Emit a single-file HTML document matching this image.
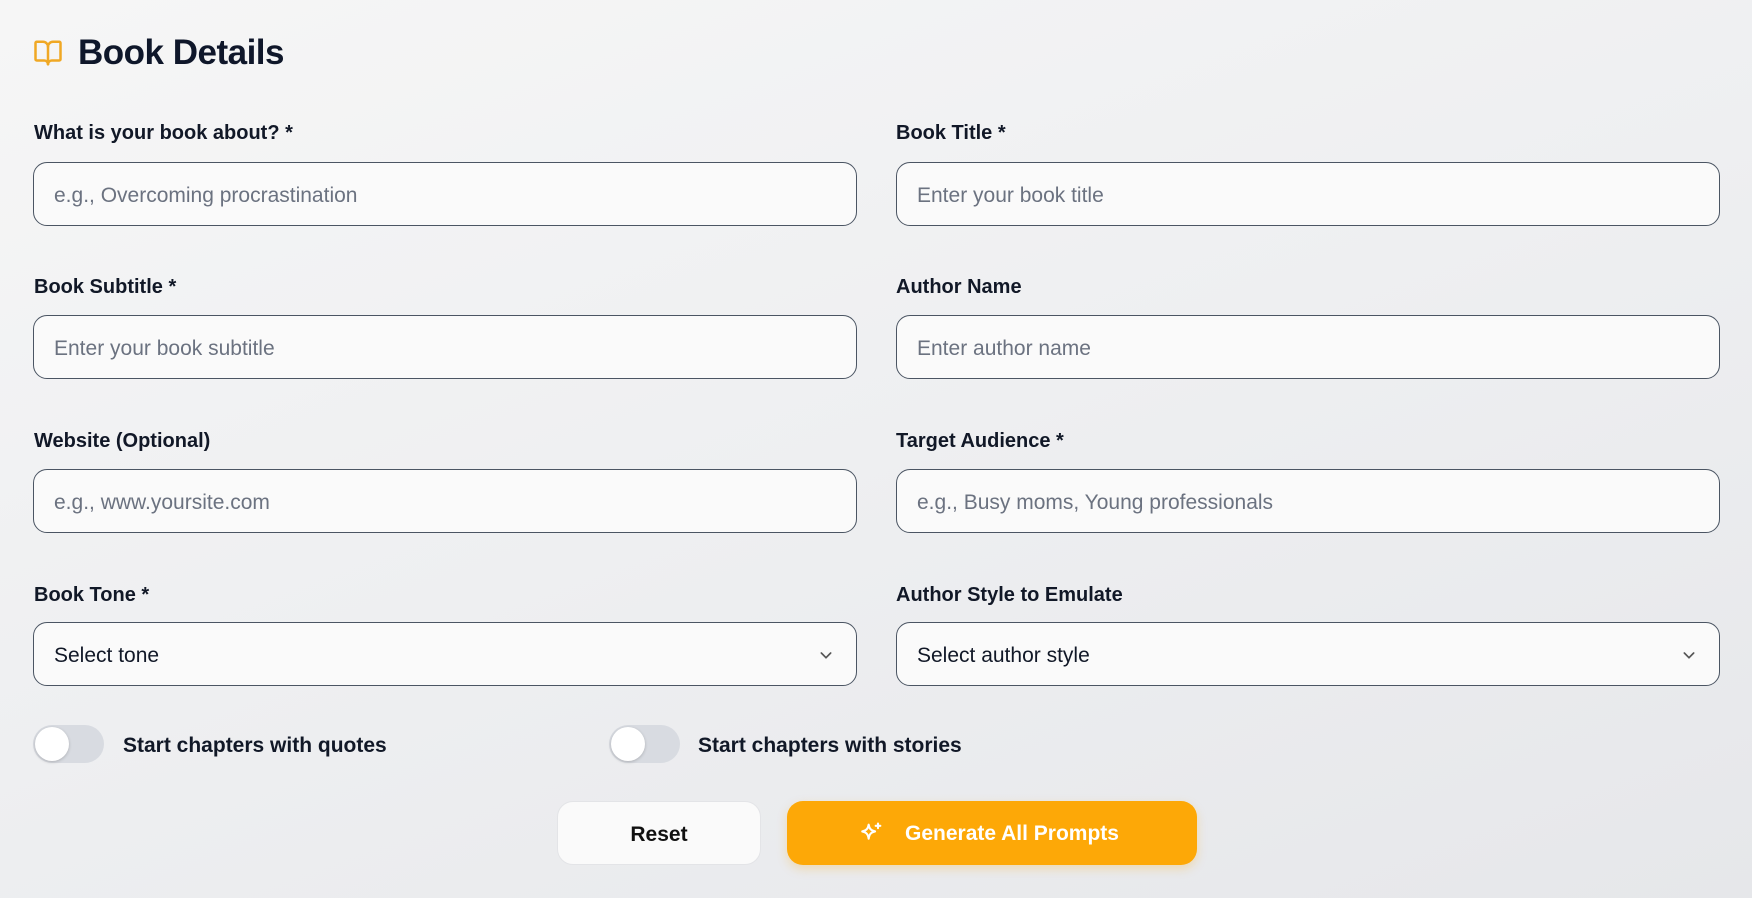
<!DOCTYPE html>
<html><head><meta charset="utf-8"><style>
*{box-sizing:border-box;margin:0;padding:0}
html,body{width:1752px;height:898px;overflow:hidden}
body{background:linear-gradient(160deg,#f6f6f6 0%,#eeeff1 50%,#e6e7ea 100%);font-family:"Liberation Sans",sans-serif;color:#111827;position:relative}
.title{position:absolute;left:78px;top:33px;font-size:35px;font-weight:bold;color:#0f172a;letter-spacing:-0.5px}
.icon{position:absolute;left:33px;top:38px}
.lbl{position:absolute;font-size:20px;font-weight:bold;color:#111827}
.inp{position:absolute;width:824px;height:64px;border:1.3px solid #4b5563;border-radius:14px;background:#fafafa;font-size:21px;color:#6b7280;padding-left:20px;line-height:66px}
.sel{color:#111827}
.chev{position:absolute;right:22px;top:24px}
.tog{position:absolute;width:71px;height:38px;border-radius:19px;background:#d8dbe1}
.tog::after{content:"";position:absolute;left:2px;top:2px;width:34px;height:34px;border-radius:50%;background:#fff;box-shadow:0 1px 3px rgba(0,0,0,.2)}
.tl{position:absolute;font-size:21px;font-weight:bold;color:#111827;top:734px}
.btn{position:absolute;top:801px;height:64px;border-radius:16px;font-size:21px;font-weight:bold;text-align:center;line-height:66px}
</style></head><body>
<svg class="icon" width="30" height="30" viewBox="0 0 24 24" fill="none" stroke="#f0a824" stroke-width="2" stroke-linecap="round" stroke-linejoin="round"><path d="M12 7v14"/><path d="M3 18a1 1 0 0 1-1-1V4a1 1 0 0 1 1-1h5a4 4 0 0 1 4 4 4 4 0 0 1 4-4h5a1 1 0 0 1 1 1v13a1 1 0 0 1-1 1h-6a3 3 0 0 0-3 3 3 3 0 0 0-3-3z"/></svg>
<div class="title">Book Details</div>

<div class="lbl" style="left:34px;top:122px">What is your book about? *</div>
<div class="inp" style="left:33px;top:162px">e.g., Overcoming procrastination</div>
<div class="lbl" style="left:896px;top:122px">Book Title *</div>
<div class="inp" style="left:896px;top:162px">Enter your book title</div>

<div class="lbl" style="left:34px;top:276px">Book Subtitle *</div>
<div class="inp" style="left:33px;top:315px">Enter your book subtitle</div>
<div class="lbl" style="left:896px;top:276px">Author Name</div>
<div class="inp" style="left:896px;top:315px">Enter author name</div>

<div class="lbl" style="left:34px;top:430px">Website (Optional)</div>
<div class="inp" style="left:33px;top:469px">e.g., www.yoursite.com</div>
<div class="lbl" style="left:896px;top:430px">Target Audience *</div>
<div class="inp" style="left:896px;top:469px">e.g., Busy moms, Young professionals</div>

<div class="lbl" style="left:34px;top:584px">Book Tone *</div>
<div class="inp sel" style="left:33px;top:622px">Select tone<svg class="chev" width="16" height="16" viewBox="0 0 24 24" fill="none" stroke="#555" stroke-width="2.5" stroke-linecap="round"><path d="M5 9l7 7 7-7"/></svg></div>
<div class="lbl" style="left:896px;top:584px">Author Style to Emulate</div>
<div class="inp sel" style="left:896px;top:622px">Select author style<svg class="chev" width="16" height="16" viewBox="0 0 24 24" fill="none" stroke="#555" stroke-width="2.5" stroke-linecap="round"><path d="M5 9l7 7 7-7"/></svg></div>

<div class="tog" style="left:33px;top:725px"></div>
<div class="tl" style="left:123px">Start chapters with quotes</div>
<div class="tog" style="left:609px;top:725px"></div>
<div class="tl" style="left:698px">Start chapters with stories</div>

<div class="btn" style="left:557px;width:204px;background:#fafafa;border:1px solid #e3e4e7;color:#111">Reset</div>
<div class="btn" style="left:787px;width:410px;background:#fda807;color:#fff;box-shadow:0 4px 10px rgba(253,168,7,.25)"><svg style="position:absolute;left:70px;top:19px" width="28" height="28" viewBox="0 0 24 24" fill="none" stroke="#fff" stroke-width="1.8" stroke-linejoin="round" stroke-linecap="round"><path d="M10 4c.6 3.5 2 5 5.5 5.8C12 10.6 10.6 12 10 16c-.6-4-2-5.4-5.5-6.2C8 9 9.4 7.5 10 4z"/><path d="M18 3v4M16 5h4"/></svg><span style="padding-left:40px">Generate All Prompts</span></div>
</body></html>
